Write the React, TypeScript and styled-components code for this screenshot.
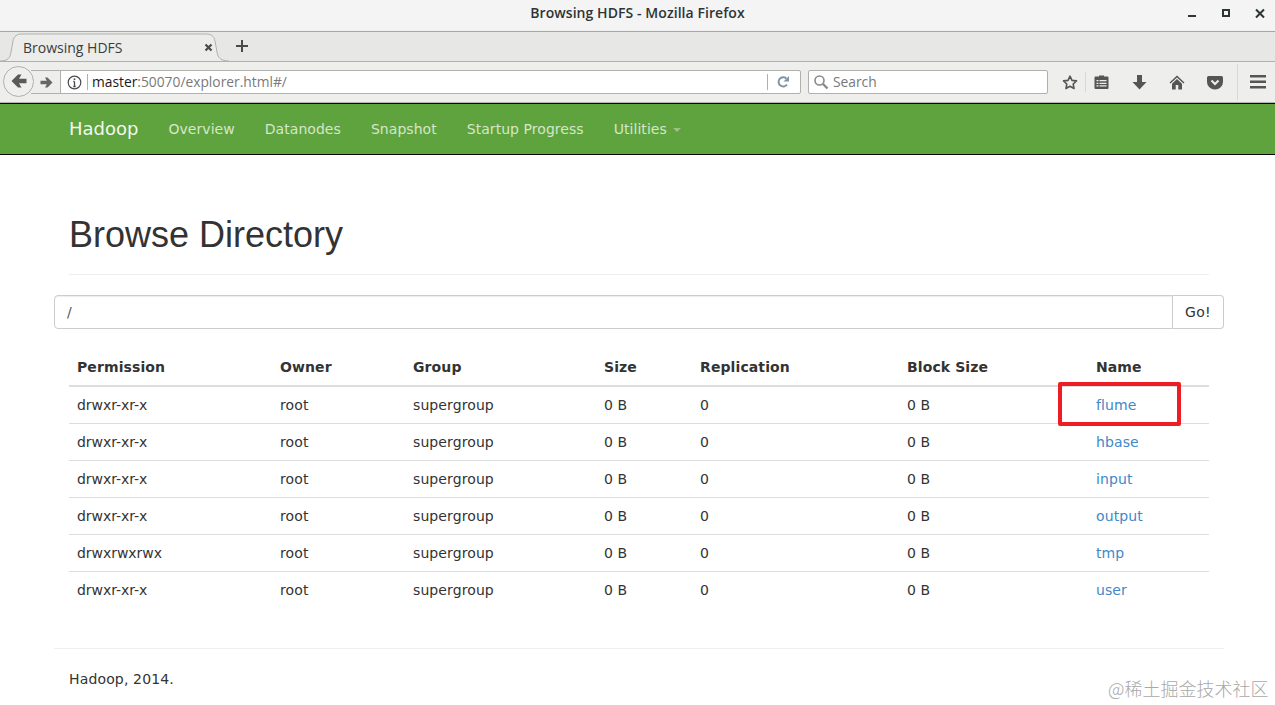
import React from "react";
import styled, { createGlobalStyle } from "styled-components";

const Global = createGlobalStyle`
  html, body { margin: 0; padding: 0; background: #fff; }
  body { font-family: "DejaVu Sans", sans-serif; font-size: 14px; line-height: 20px; color: #333; }
  #root { width: 1275px; height: 705px; overflow: hidden; }
`;

const Page = styled.div`
  position: relative;
  width: 1275px;
  height: 705px;
  overflow: hidden;
  background: #fff;
`;

const ChromeFont = `"Open Sans", "Noto Sans", sans-serif`;

const TitleBar = styled.div`
  height: 31px;
  box-sizing: border-box;
  background: #f4f4f4;
  border-bottom: 1px solid #f0f0f0;
  display: flex;
  align-items: center;
  justify-content: center;
  position: relative;
  font: 600 14px/26px ${ChromeFont};
  letter-spacing: 0.07px;
  color: #2e3436;
  padding-bottom: 4px;
`;

const WindowButtons = styled.div`
  position: absolute;
  top: 7px;
  right: 8px;
  display: flex;
  gap: 20px;
  align-items: center;
`;

const TabBar = styled.div`
  height: 31px;
  box-sizing: border-box;
  background: #e7e7e6;
  border-top: 1px solid #a8a8a4;
  border-bottom: 1px solid #b0b0ac;
  display: flex;
  align-items: flex-end;
`;

const TabShape = styled.div`
  position: relative;
  width: 240px;
  height: 29px;
  margin-bottom: -1px;
  flex: none;
`;

const TabSvg = styled.svg`
  position: absolute;
  left: 0;
  top: 0;
`;

const TabLabel = styled.span`
  position: absolute;
  left: 23px;
  top: 5px;
  font: 400 14px/20px ${ChromeFont};
  color: #3a3d3f;
`;

const TabClose = styled.svg`
  position: absolute;
  left: 204px;
  top: 10px;
`;

const NewTab = styled.svg`
  flex: none;
  margin: 0 0 8px -5px;
`;

const NavBar = styled.div`
  height: 41px;
  box-sizing: border-box;
  background: #eeeeec;
  border-bottom: 1px solid #b4b4b0;
  display: flex;
  align-items: center;
  padding-left: 3px;
  position: relative;
`;

const BackCircle = styled.div`
  width: 29px;
  height: 29px;
  border-radius: 50%;
  border: 1px solid #b0b0ac;
  background: #efefed;
  display: flex;
  align-items: center;
  justify-content: center;
  flex: none;
  position: relative;
  z-index: 1;
  margin-right: -1px;
  margin-bottom: 2px;
`;

const ForwardBox = styled.div`
  width: 27px;
  height: 22px;
  border: 1px solid #b0b0ac;
  border-left: none;
  display: flex;
  align-items: center;
  justify-content: center;
  padding-left: 2px;
  box-sizing: content-box;
  flex: none;
  margin-left: -2px;
  margin-right: -1px;
`;

const UrlBox = styled.div`
  width: 741px;
  height: 24px;
  box-sizing: border-box;
  background: #fff;
  border: 1px solid #b0b0ac;
  border-radius: 0 2px 2px 0;
  display: flex;
  align-items: center;
  flex: none;
  margin-right: 7px;
`;

const InfoWrap = styled.div`
  width: 26px;
  height: 16px;
  display: flex;
  align-items: center;
  justify-content: center;
  border-right: 1px solid #b0b0ac;
  margin-right: 4px;
  flex: none;
`;

const UrlText = styled.span`
  font: 400 13.8px/20px ${ChromeFont};
  color: #7a7a7a;
  flex: 1;
  b { font-weight: 400; color: #1a1a1a; }
`;

const ReloadWrap = styled.div`
  width: 33px;
  height: 16px;
  box-sizing: border-box;
  padding-right: 2px;
  border-left: 1px solid #b0b0ac;
  display: flex;
  align-items: center;
  justify-content: center;
  flex: none;
`;

const SearchBox = styled.div`
  width: 240px;
  height: 24px;
  box-sizing: border-box;
  background: #fff;
  border: 1px solid #b0b0ac;
  border-radius: 2px;
  display: flex;
  align-items: center;
  gap: 4px;
  padding-left: 4px;
  font: 400 13.8px/20px ${ChromeFont};
  color: #77797a;
  flex: none;
`;

const ToolIcons = styled.div`
  display: flex;
  align-items: center;
  height: 100%;
  margin-left: 14px;
`;

const ToolIcon = styled.div<{ $w: number }>`
  width: ${(p) => p.$w}px;
  display: flex;
  align-items: center;
  justify-content: center;
  flex: none;
`;

const ToolSep = styled.div`
  width: 1px;
  height: 20px;
  background: #d8d8d5;
  flex: none;
  margin-left: 7px;
`;

const ToolSepTall = styled(ToolSep)`
  height: 36px;
  margin-left: -1px;
`;

const GreenNav = styled.nav`
  height: 52px;
  box-sizing: border-box;
  background: #5fa33e;
  border-top: 1px solid #0a0a0a;
  border-bottom: 1px solid #0a0a0a;
  display: flex;
  align-items: center;
  padding-left: 69px;
`;

const Brand = styled.a`
  font-size: 18px;
  line-height: 20px;
  color: #f2f7ef;
  margin-right: 30px;
`;

const NavLink = styled.a`
  font-size: 14px;
  line-height: 20px;
  letter-spacing: 0.05px;
  color: #d5e6cb;
  margin-right: 30px;
  display: flex;
  align-items: center;
`;

const Caret = styled.span`
  display: inline-block;
  margin-left: 6px;
  margin-top: 2px;
  border-top: 4px solid #9cc186;
  border-left: 4px solid transparent;
  border-right: 4px solid transparent;
`;

const Container = styled.main`
  width: 1140px;
  margin: 0 0 0 69px;
`;

const PageHeader = styled.div`
  padding-top: 60px;
  height: 120px;
  box-sizing: border-box;
  border-bottom: 1px solid #eeeeee;
`;

const Title = styled.h1`
  margin: 0;
  font: 400 36px/40px "Liberation Sans", Arial, sans-serif;
  color: #333;
`;

const InputGroup = styled.div`
  margin: 20px -15px 0;
  display: flex;
  height: 34px;
`;

const PathInput = styled.div`
  flex: 1;
  box-sizing: border-box;
  border: 1px solid #ccc;
  border-radius: 4px 0 0 4px;
  padding: 6px 12px;
  color: #555;
  box-shadow: inset 0 1px 1px rgba(0, 0, 0, 0.075);
`;

const GoButton = styled.div`
  width: 51px;
  box-sizing: border-box;
  border: 1px solid #ccc;
  border-left: none;
  border-radius: 0 4px 4px 0;
  display: flex;
  align-items: center;
  justify-content: center;
  letter-spacing: 0.3px;
  color: #333;
`;

const Table = styled.table`
  width: 1140px;
  margin-top: 20px;
  border-collapse: collapse;
  table-layout: fixed;
`;

const Th = styled.th<{ $w: number }>`
  width: ${(p) => p.$w}px;
  box-sizing: border-box;
  text-align: left;
  padding: 8px;
  font-weight: 700;
  letter-spacing: 0.1px;
  border-bottom: 2px solid #ddd;
`;

const Td = styled.td`
  padding: 8px;
  letter-spacing: 0.1px;
  border-top: 1px solid #ddd;
`;

const PermCell = styled(Td)`
  letter-spacing: -0.05px;
`;

const FirstRow = styled.tr`
  & > td { border-top: none; }
`;

const LinkName = styled.a`
  color: #4089c9;
`;

const Footer = styled.footer`
  margin: 40px -15px 0;
  padding: 20px 15px 0;
  border-top: 1px solid #eeeeee;
  letter-spacing: 0.15px;
`;

const Highlight = styled.div`
  position: absolute;
  left: 1058px;
  top: 382px;
  width: 123px;
  height: 44px;
  box-sizing: border-box;
  border: 4px solid #ee1c25;
  border-radius: 2px;
`;

const Watermark = styled.div`
  position: absolute;
  left: 1108px;
  top: 678px;
  font: 300 18px/20px "Noto Sans CJK SC", "Liberation Sans", sans-serif;
  color: #a8a8a8;
`;

const widths = [203, 133, 191, 96, 207, 189, 121];
const headers = ["Permission", "Owner", "Group", "Size", "Replication", "Block Size", "Name"];
const rows = [
  ["drwxr-xr-x", "flume"],
  ["drwxr-xr-x", "hbase"],
  ["drwxr-xr-x", "input"],
  ["drwxr-xr-x", "output"],
  ["drwxrwxrwx", "tmp"],
  ["drwxr-xr-x", "user"],
];

const Row = ({ perm, name, first }: { perm: string; name: string; first: boolean }) => {
  const cells = (
    <>
      <PermCell>{perm}</PermCell>
      <Td>root</Td>
      <Td>supergroup</Td>
      <Td>0 B</Td>
      <Td>0</Td>
      <Td>0 B</Td>
      <Td>
        <LinkName>{name}</LinkName>
      </Td>
    </>
  );
  return first ? <FirstRow>{cells}</FirstRow> : <tr>{cells}</tr>;
};

export default function App() {
  return (
    <Page>
      <Global />
      <TitleBar>
        Browsing HDFS - Mozilla Firefox
        <WindowButtons>
          <svg width="14" height="14" viewBox="0 0 14 14"><rect x="3" y="8" width="8" height="2" fill="#2e3436" /></svg>
          <svg width="14" height="14" viewBox="0 0 14 14" fill="none"><rect x="4" y="3" width="6" height="6" stroke="#2e3436" strokeWidth="2" /></svg>
          <svg width="14" height="14" viewBox="0 0 14 14" fill="none"><path d="M3 2.500l8 8M11 2.500l-8 8" stroke="#2e3436" strokeWidth="2" /></svg>
        </WindowButtons>
      </TitleBar>
      <TabBar>
        <TabShape>
          <TabSvg width="240" height="29" viewBox="0 0 240 29">
            <path d="M0 28c8 0 10-3 11-9l2-11c1-5 4-7 9-7h184c5 0 8 2 9 7l2 11c1 6 4 9 12 9z" fill="#ecECEA" />
            <path d="M0 28c8 0 10-3 11-9l2-11c1-5 4-7 9-7h184c5 0 8 2 9 7l2 11c1 6 4 9 12 9" fill="none" stroke="#b0b0ac" />
          </TabSvg>
          <TabLabel>Browsing HDFS</TabLabel>
          <TabClose width="10" height="10" viewBox="0 0 10 10">
            <path d="M1.500 1.500l6 6M7.500 1.500l-6 6" stroke="#4a4a4a" strokeWidth="2.200" />
          </TabClose>
        </TabShape>
        <NewTab width="14" height="14" viewBox="0 0 14 14">
          <path d="M7 1v12M1 7h12" stroke="#4a4a4a" strokeWidth="2" />
        </NewTab>
      </TabBar>
      <NavBar>
        <BackCircle>
          <svg width="16" height="16" viewBox="0 0 16 16"><path d="M.5 8L7 1.500h3.500L8 5.800h7.500v4.400H8l2.500 4.300H7z" fill="#5a5a5a" /></svg>
        </BackCircle>
        <ForwardBox>
          <svg width="13" height="13" viewBox="0 0 13 13"><path d="M12.500 6.500L7.500 1.500H5L6.800 4.700H.5v3.600h6.300L5 11.500h2.500z" fill="#666" /></svg>
        </ForwardBox>
        <UrlBox>
          <InfoWrap>
            <svg width="15" height="15" viewBox="0 0 15 15" fill="none">
              <circle cx="7.500" cy="7.500" r="6.300" stroke="#4a4a4a" strokeWidth="1.200" />
              <path d="M7.500 6.500v5M6.300 6.500h1.200M6.300 11.500h2.400" stroke="#4a4a4a" strokeWidth="1.300" />
              <rect x="6.700" y="3.400" width="1.600" height="1.600" fill="#4a4a4a" />
            </svg>
          </InfoWrap>
          <UrlText>
            <b>master</b>:50070/explorer.html#/
          </UrlText>
          <ReloadWrap>
            <svg width="14" height="14" viewBox="0 0 14 14" fill="none">
              <path d="M11 9.500A4.600 4.600 0 1 1 10.300 3.500" stroke="#7f96a6" strokeWidth="2" />
              <path d="M13 1v5.500H7.500z" fill="#7f96a6" />
            </svg>
          </ReloadWrap>
        </UrlBox>
        <SearchBox>
          <svg width="16" height="16" viewBox="0 0 16 16" fill="none">
            <circle cx="6.500" cy="6.500" r="4.500" stroke="#8a8a8a" strokeWidth="1.600" />
            <path d="M10 10l4.500 4.500" stroke="#8a8a8a" strokeWidth="2.400" />
          </svg>
          Search
        </SearchBox>
        <ToolIcons>
          <ToolIcon $w={16}>
            <svg width="17" height="17" viewBox="0 0 17 17" fill="none">
              <path d="M8.500 1.800l2.100 4.400 4.800.6-3.500 3.300.9 4.800-4.300-2.400-4.300 2.400.9-4.800-3.500-3.300 4.800-.6z" stroke="#555" strokeWidth="1.700" strokeLinejoin="round" />
            </svg>
          </ToolIcon>
          <ToolSep />
          <ToolIcon $w={30}>
            <svg width="15" height="16" viewBox="0 0 15 16">
              <path d="M5 2.500V1.500h5v1h3.500a1 1 0 0 1 1 1V14a1 1 0 0 1-1 1h-12a1 1 0 0 1-1-1V3.500a1 1 0 0 1 1-1z" fill="#555" />
              <path d="M2.500 6h2v1.300h-2zM5.500 6h7v1.300h-7zM2.500 8.700h2V10h-2zM5.500 8.700h7V10h-7zM2.500 11.300h2v1.300h-2zM5.500 11.300h7v1.300h-7z" fill="#eee" />
            </svg>
          </ToolIcon>
          <ToolIcon $w={46}>
            <svg width="15" height="16" viewBox="0 0 15 16"><path d="M5 1h5v7h4.500l-7 7.500L.5 8H5z" fill="#555" /></svg>
          </ToolIcon>
          <ToolIcon $w={30}>
            <svg width="16" height="15" viewBox="0 0 16 15">
              <path d="M8 .5L.5 7.500l1 1L8 2.500l6.500 6 1-1z" fill="#555" />
              <path d="M8 4l-5 4.700V14.500h3.700V10h2.600v4.500H13V8.700z" fill="#555" />
            </svg>
          </ToolIcon>
          <ToolIcon $w={46}>
            <svg width="16" height="15" viewBox="0 0 16 15">
              <path d="M1.500 1h13A1.500 1.500 0 0 1 16 2.500V7a8 7.500 0 0 1-16 0V2.500A1.500 1.500 0 0 1 1.500 1z" fill="#555" />
              <path d="M4.500 5.500L8 9l3.500-3.500" fill="none" stroke="#eee" strokeWidth="2" />
            </svg>
          </ToolIcon>
          <ToolSepTall />
          <ToolIcon $w={40}>
            <svg width="16" height="14" viewBox="0 0 16 14"><path d="M0 0h16v2.500H0zM0 5.500h16V8H0zM0 11h16v2.500H0z" fill="#555" /></svg>
          </ToolIcon>
        </ToolIcons>
      </NavBar>
      <GreenNav>
        <Brand>Hadoop</Brand>
        <NavLink>Overview</NavLink>
        <NavLink>Datanodes</NavLink>
        <NavLink>Snapshot</NavLink>
        <NavLink>Startup Progress</NavLink>
        <NavLink>
          Utilities
          <Caret />
        </NavLink>
      </GreenNav>
      <Container>
        <PageHeader>
          <Title>Browse Directory</Title>
        </PageHeader>
        <InputGroup>
          <PathInput>/</PathInput>
          <GoButton>Go!</GoButton>
        </InputGroup>
        <Table>
          <thead>
            <tr>
              {headers.map((h, i) => (
                <Th key={h} $w={widths[i]}>
                  {h}
                </Th>
              ))}
            </tr>
          </thead>
          <tbody>
            {rows.map((r, i) => (
              <Row key={r[1]} perm={r[0]} name={r[1]} first={i === 0} />
            ))}
          </tbody>
        </Table>
        <Footer>Hadoop, 2014.</Footer>
      </Container>
      <Highlight />
      <Watermark>@稀土掘金技术社区</Watermark>
    </Page>
  );
}
